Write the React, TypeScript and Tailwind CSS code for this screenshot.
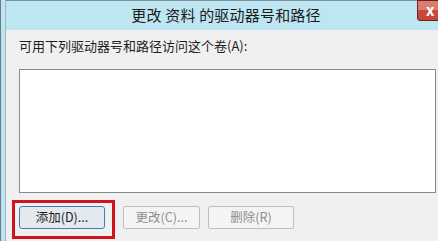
export default function App() {
  return (
    <div className="w-[438px] h-[241px] overflow-hidden bg-[#f0f0f0] font-['Microsoft_YaHei','Noto_Sans_CJK_SC',sans-serif]">
      <div className="flex h-full border-l border-[#6b7b82]">
        <div className="w-[5px] shrink-0 bg-[#bde6f2] border-r border-[#9fb8c2]" />
        <div className="flex-1 flex flex-col">
          <div className="relative h-[30px] shrink-0 bg-[#bde6f2] border-t border-[#7e8f96] flex items-center justify-center">
            <span className="text-[15px] text-[#1b1b1b] pl-[8px] tracking-[0.2px]">更改 资料 的驱动器号和路径</span>
            <div className="absolute right-[-10px] top-[-1px] w-[31px] h-[21px] bg-[#c7483a] border border-[#6e2018] rounded-bl-[3px] overflow-hidden">
              <div className="h-[9px] bg-[#dc7c6f]" />
              <span className="absolute left-[8px] top-[1px] text-white font-bold text-[15px] leading-none">x</span>
            </div>
          </div>

          <div className="flex-1 flex flex-col pl-[13px] pt-[8px]">
            <div className="text-[13px] text-[#1e1e1e] leading-[16px] h-[31px]">
              可用下列驱动器号和路径访问这个卷(A):
            </div>
            <div className="h-[124px] shrink-0 bg-white border border-[#8a8a8a] mr-[2px]" />

            <div className="flex items-start mt-[7px] -ml-[7px] gap-[8px]">
              <div className="border-[3px] border-[#d2121c] p-[3px] pl-[4px] pr-[7px] pb-[7px]">
                <button className="w-[86px] h-[23px] rounded-[3px] border border-[#3c7fb1] bg-[#e3e9ee] text-[12.5px] text-[#1e1e1e] flex items-center justify-center">
                  添加(D)...
                </button>
              </div>
              <button className="w-[77px] h-[23px] mt-[6px] rounded-[2px] border border-[#bfbfbf] bg-[#f4f4f4] text-[12.5px] text-[#8d8d8d] flex items-center justify-center">
                更改(C)...
              </button>
              <button className="w-[86px] h-[23px] mt-[6px] rounded-[2px] border border-[#bfbfbf] bg-[#f4f4f4] text-[12.5px] text-[#8d8d8d] flex items-center justify-center">
                删除(R)
              </button>
            </div>
          </div>
        </div>
      </div>
    </div>
  )
}
